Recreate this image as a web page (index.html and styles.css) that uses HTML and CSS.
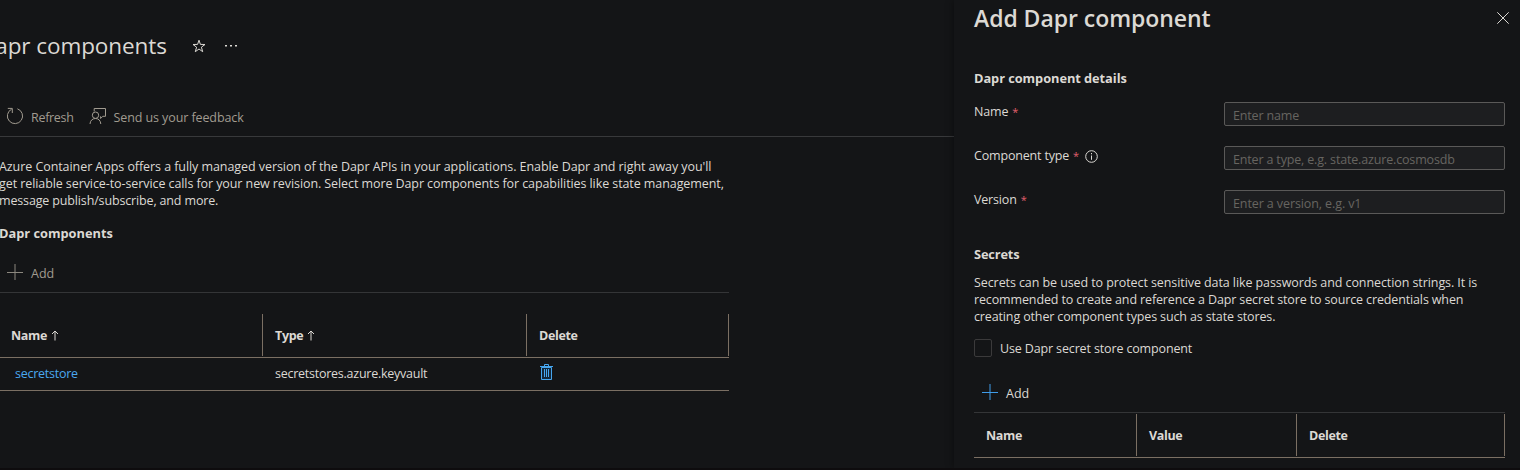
FILE: index.html
```html
<!DOCTYPE html>
<html lang="en">
<head>
<meta charset="utf-8">
<title>Dapr components</title>
<link rel="stylesheet" href="styles.css">
</head>
<body>
<div class="portal">
  <main class="page">
    <header class="page-header">
      <h1 class="page-title">Dapr components</h1>
      <svg class="star" width="14" height="14" viewBox="0 0 14 14"><path d="M7 1.2 8.4 5.4 13 5.5 9.4 8.2 10.7 12.7 7 10 3.3 12.7 4.6 8.2 1 5.5 5.6 5.4Z"/></svg>
      <svg class="more" width="14" height="4" viewBox="0 0 14 4"><path d="M1 1h2v1.5H1zM6 1h2v1.5H6zM11 1h2v1.5h-2z"/></svg>
    </header>
    <nav class="toolbar">
      <span class="command">
        <svg class="line-icon" width="18" height="18" viewBox="0 0 18 18"><path d="M11.4 1.8A7.6 7.6 0 1 1 5.6 2.2M1.8 1.4H6.3V6"/></svg>
        <span class="refresh-label">Refresh</span>
      </span>
      <span class="command">
        <svg class="line-icon" width="18" height="18" viewBox="0 0 18 18"><path d="M5.2 4.5V1.5H16.5V9.3H13.8L11.6 11.5V9.3M1 17C1.2 13.5 3.5 11.5 6.5 11.5S11.6 13.5 11.8 17"/><circle cx="6.5" cy="8.2" r="3.2"/></svg>
        <span class="feedback-label">Send us your feedback</span>
      </span>
    </nav>
    <section class="overview">
      <p class="copy intro"><span class="intro-lead">Azure Container Apps offers a fully managed version of the Dapr APIs in your applications. Enable Dapr and right away you'll</span><br><span class="wide">get reliable service-to-service calls for your new revision. Select more Dapr components for capabilities like state management,</span><br>message publish/subscribe, and more.</p>
      <h2 class="heading list-heading">Dapr components</h2>
      <div class="add-bar">
        <svg class="plus muted" width="16" height="16" viewBox="0 0 16 16"><path d="M0 8.5H16M8 0V16"/></svg>
        <span class="add-label">Add</span>
      </div>
      <div class="grid component-grid">
        <div class="grid-row grid-head">
          <div class="cell name-head">Name <svg class="sort" width="8" height="11" viewBox="0 0 8 11"><path d="M4 10.5V1M1 4 4 1 7 4"/></svg></div>
          <div class="cell">Type <svg class="sort" width="8" height="11" viewBox="0 0 8 11"><path d="M4 10.5V1M1 4 4 1 7 4"/></svg></div>
          <div class="cell">Delete</div>
        </div>
        <div class="grid-row grid-item">
          <div class="cell"><a class="link">secretstore</a></div>
          <div class="cell vault">secretstores.azure.keyvault</div>
          <div class="cell"><svg class="trash" width="15" height="17" viewBox="0 0 15 17"><path class="trash-body" d="M2.5 3.5H12.5V15.5H2.5Z"/><path d="M1 2.5H14M5.5 2V.5H9.5V2M5.5 5V13M7.5 5V13M9.5 5V13"/></svg></div>
        </div>
      </div>
    </section>
  </main>
  <aside class="panel">
    <header class="panel-header">
      <h1 class="panel-title">Add Dapr component</h1>
      <svg class="close" width="12" height="12" viewBox="0 0 12 12"><path d="M.3.3 11.7 11.7M11.7.3.3 11.7"/></svg>
    </header>
    <h2 class="heading details-heading">Dapr component details</h2>
    <div class="form">
      <div class="field"><span class="label">Name <span class="required">*</span></span><input class="input" placeholder="Enter name"></div>
      <div class="field"><span class="label">Component type <span class="required">*</span><svg class="info" width="13" height="13" viewBox="0 0 13 13"><circle cx="6.5" cy="6.5" r="5.8"/><path d="M6.5 5.5V9.8M6.5 3V4.3"/></svg></span><input class="input" placeholder="Enter a type, e.g. state.azure.cosmosdb"></div>
      <div class="field"><span class="label">Version <span class="required">*</span></span><input class="input version-input" placeholder="Enter a version, e.g. v1"></div>
    </div>
    <h2 class="heading secrets-heading">Secrets</h2>
    <p class="copy secrets-copy"><span class="wide">Secrets can be used to protect sensitive data like passwords and connection strings. It is</span><br>recommended to create and reference a Dapr secret store to source credentials when<br>creating other component types such as state stores.</p>
    <label class="check"><span class="box"></span><span>Use Dapr secret store component</span></label>
    <div class="add-bar secret-add">
      <svg class="plus" width="16" height="16" viewBox="0 0 16 16"><path d="M0 8.5H16M8 0V16"/></svg>
      <span class="add-label">Add</span>
    </div>
    <div class="grid secret-grid">
      <div class="grid-row grid-head">
        <div class="cell">Name</div>
        <div class="cell">Value</div>
        <div class="cell">Delete</div>
      </div>
    </div>
  </aside>
</div>
</body>
</html>
```
FILE: styles.css
```css
* { box-sizing: border-box; }
body {
  margin: 0;
  background: #141517;
  color: #dcd9d4;
  font: 12.5px/17px "Open Sans", "Noto Sans", sans-serif;
  letter-spacing: -0.18px;
  white-space: nowrap;
}
h1, h2, p { margin: 0; }
svg { flex: none; fill: none; stroke: currentColor; }
.portal { display: flex; width: 1520px; height: 470px; overflow: hidden; border-bottom: 2px solid #0e0c0e; }

.page { width: 954px; overflow: hidden; }
.page-header { display: flex; align-items: center; height: 92px; }
.page-title { width: 193px; margin-left: -21px; font-size: 22.5px; font-weight: 400; line-height: 32px; letter-spacing: -0.08px; }
.star { margin-left: 20px; }
.more { margin-left: 18px; fill: currentColor; stroke: none; }
.toolbar { display: flex; gap: 15px; height: 45px; padding: 15px 0 0 6px; border-bottom: 1px solid #38393b; color: #a19b90; }
.command { display: flex; align-items: flex-start; gap: 7px; line-height: 22px; }
.refresh-label { letter-spacing: -0.3px; }
.feedback-label { letter-spacing: -0.1px; }
.overview { width: 729px; padding-top: 21px; }
.copy { letter-spacing: -0.135px; }
.intro { margin-left: -1px; letter-spacing: -0.15px; }
.intro-lead { letter-spacing: -0.07px; }
.wide { letter-spacing: -0.085px; }
.heading { font-size: 12.8px; font-weight: 700; line-height: 18px; letter-spacing: -0.05px; }
.list-heading { margin: 15px 0 0 -1px; letter-spacing: 0; }
.add-bar { display: flex; align-items: center; gap: 8px; height: 40px; margin-top: 11px; padding: 0 0 1px 7px; border-bottom: 1px solid #343537; color: #a19b90; }
.add-label { padding-top: 3px; letter-spacing: 0; }
.plus { color: #3f9be8; }
.plus.muted { color: #8b877e; }

.grid-row { display: grid; border-bottom: 1px solid #7b6f63; }
.component-grid .grid-row { grid-template-columns: 263px 264px 202px; }
.component-grid { margin-top: 21px; }
.grid-head { height: 44px; padding-bottom: 1px; font-weight: 700; letter-spacing: -0.35px; }
.grid-head .cell { border-right: 1px solid #7b6f63; }
.cell { display: flex; align-items: center; padding-left: 12px; }
.name-head { padding-left: 11px; }
.sort { margin-left: 4px; }
.grid-item { height: 33px; padding-bottom: 2px; letter-spacing: -0.25px; }
.link { padding-left: 3px; color: #4aa8f0; }
.trash { margin-top: -1px; color: #46a5ee; }
.trash-body { fill: #132638; }

.panel { position: relative; width: 566px; padding: 0 15px 0 20px; background: #141517; box-shadow: 0 0 8px rgba(0, 0, 0, .45); }
.panel-header { display: flex; align-items: center; justify-content: space-between; height: 36px; }
.panel-title { font-size: 23px; font-weight: 600; line-height: 32px; letter-spacing: -0.05px; }
.close { margin-right: -4px; }
.details-heading { margin-top: 33px; }
.form { display: grid; gap: 20px; margin-top: 15px; }
.field { display: flex; justify-content: space-between; height: 24px; }
.label { display: flex; gap: 4px; line-height: 19px; }
.required { color: #e0606e; font-size: 11px; }
.info { margin: 4px 0 0 2px; }
.input { width: 281px; height: 24px; padding: 3px 8px 0; border: 1px solid #5a5958; border-radius: 2px; background: #1d1e20; color: #dcd9d4; font: inherit; letter-spacing: -0.16px; }
.version-input { letter-spacing: -0.1px; }
.input::placeholder { color: #676560; opacity: 1; }
.secrets-heading { margin-top: 31px; letter-spacing: -0.15px; }
.secrets-copy { margin-top: 11px; }
.check { display: flex; align-items: center; gap: 8px; margin-top: 14px; height: 18px; letter-spacing: -0.14px; }
.box { width: 18px; height: 18px; border: 1px solid #3b3a3b; border-radius: 2px; }
.secret-add { margin-top: 16px; padding-left: 8px; color: #dcd9d4; }
.secret-grid { margin-top: 1px; }
.secret-grid .grid-row { grid-template-columns: 163px 160px 208px; }
```
